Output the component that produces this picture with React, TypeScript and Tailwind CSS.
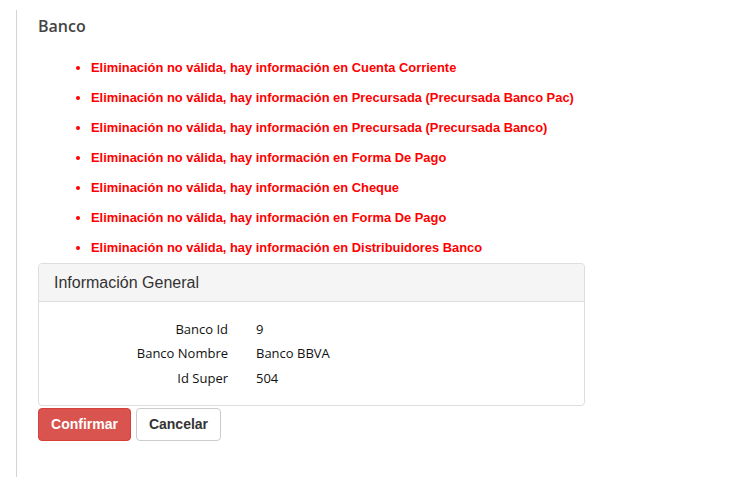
import React from 'react';

const errores = [
  'Cuenta Corriente',
  'Precursada (Precursada Banco Pac)',
  'Precursada (Precursada Banco)',
  'Forma De Pago',
  'Cheque',
  'Forma De Pago',
  'Distribuidores Banco',
];

const campos = [
  { label: 'Banco Id', value: '9' },
  { label: 'Banco Nombre', value: 'Banco BBVA' },
  { label: 'Id Super', value: '504' },
];

export default function App() {
  return (
    <div className="min-h-[477px] bg-white pl-4 pt-[10px]">
      <div className="border-l border-[#d4d4d4] pl-[21px] pt-[6px] min-h-[467px] w-[570px]">
        {/* Titulo */}
        <h1 className="text-[16px] font-semibold text-[#444] leading-5 font-['Open_Sans',sans-serif]">
          Banco
        </h1>

        {/* Errores */}
        <ul className="mt-[23px] pl-[53px] list-disc text-[12.9px] font-bold text-[#f00] font-['Liberation_Sans',Arial,sans-serif]">
          {errores.map((e, i) => (
            <li key={i} className="h-[30px] leading-[18px]">
              Eliminación no válida, hay información en {e}
            </li>
          ))}
        </ul>

        {/* Panel */}
        <div className="mt-[-6px] w-[547px] border border-[#ddd] rounded-[4px] overflow-hidden">
          <div className="h-[38px] bg-[#f5f5f5] border-b border-[#ddd] px-[15px] flex items-center text-[16px] text-[#333] font-['Liberation_Sans',Arial,sans-serif]">
            Información General
          </div>
          <div className="pt-[15px] pb-[14px] font-['Open_Sans',sans-serif] text-[13px] text-[#111]">
            {campos.map((c) => (
              <div key={c.label} className="flex h-[24.5px] items-center">
                <div className="w-[189px] text-right font-medium">{c.label}</div>
                <div className="ml-[28px]">{c.value}</div>
              </div>
            ))}
          </div>
        </div>

        {/* Botones */}
        <div className="mt-[2px] flex gap-[5px] font-['Liberation_Sans',Arial,sans-serif] text-[14px] font-bold">
          <button className="h-[33px] w-[93px] rounded-[4px] bg-[#d9534f] border border-[#d43f3a] text-white">
            Confirmar
          </button>
          <button className="h-[33px] w-[85px] rounded-[4px] bg-white border border-[#ccc] text-[#333]">
            Cancelar
          </button>
        </div>
      </div>
    </div>
  );
}
